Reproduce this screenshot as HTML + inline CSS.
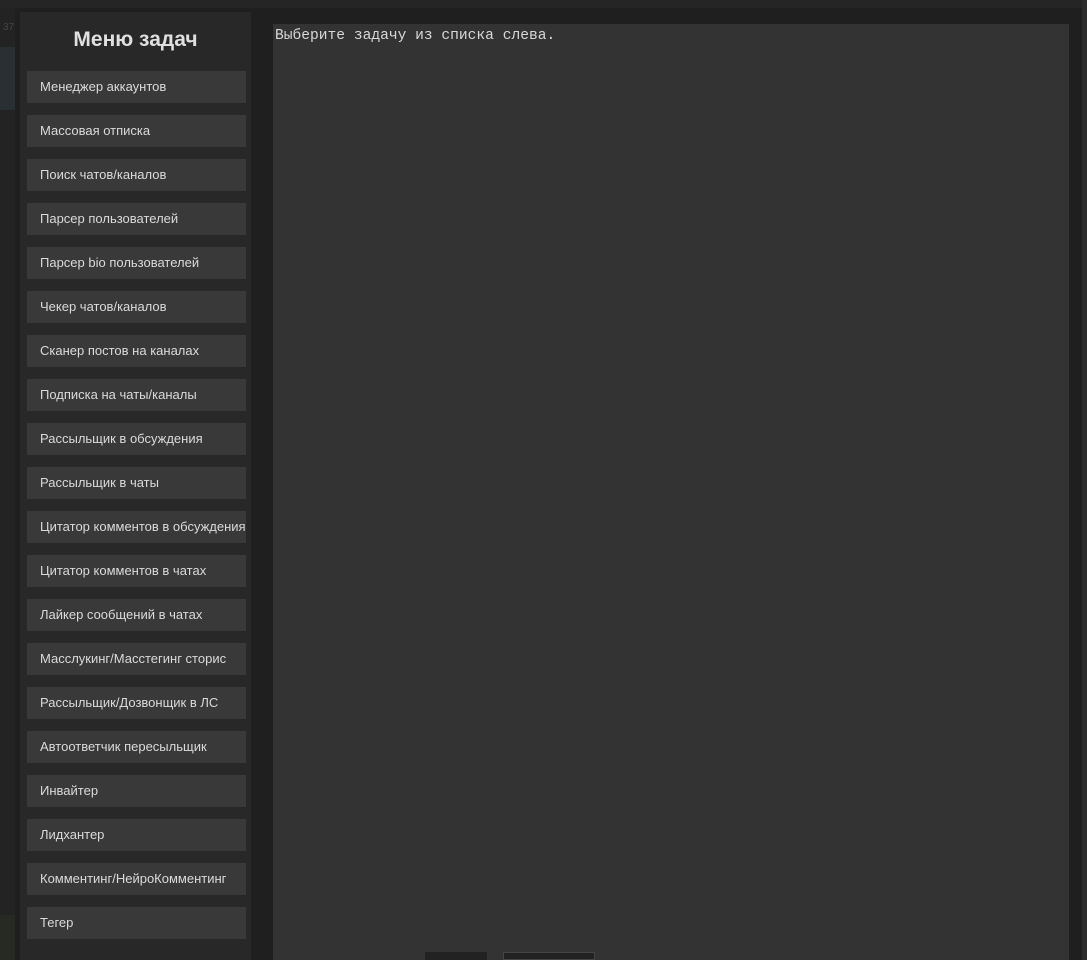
<!DOCTYPE html>
<html><head><meta charset="utf-8"><style>
html,body{margin:0;padding:0;width:1087px;height:960px;overflow:hidden;background:#252525;position:relative;font-family:"Liberation Sans",sans-serif}
.leftstrip{position:absolute;left:0;top:8px;width:15px;height:952px;background:#232323}
.leftblue{position:absolute;left:0;top:47px;width:15px;height:63px;background:#283033}
.leftgreen{position:absolute;left:0;top:915px;width:15px;height:45px;background:#272a23}
.num{position:absolute;left:3px;top:22px;font-size:10px;color:#444}
.rightstrip{position:absolute;left:1082px;top:0;width:5px;height:960px;background:#2c2c2c}
.modal{position:absolute;left:15px;top:8px;width:1067px;height:952px;background:#1f1f1f}
.side{position:absolute;left:20px;top:12px;width:231px;height:948px;background:#282828}
.title{position:absolute;left:20px;top:28px;width:231px;text-align:center;color:#e0e0e0;font-weight:bold;font-size:21px}
.btn{position:absolute;left:27px;width:219px;height:32px;background:#393939;color:#dadada;font-size:13px;line-height:32px;padding-left:13px;box-sizing:border-box;white-space:nowrap;overflow:hidden}
.content{position:absolute;left:273px;top:24px;width:796px;height:936px;background:#333333}
.msg{position:absolute;left:275px;top:28px;font-family:"Liberation Mono",monospace;font-size:14.6px;color:#d8d8d8}
.t1{position:absolute;left:425px;top:952px;width:62px;height:8px;background:#222}
.t2{position:absolute;left:503px;top:952px;width:92px;height:8px;background:#222;border:1px solid #444;box-sizing:border-box}
</style></head><body>
<div class="leftstrip"></div><div class="leftblue"></div><div class="leftgreen"></div><div class="num">37</div>
<div class="rightstrip"></div>
<div class="modal"></div>
<div class="side"></div>
<div class="title">Меню задач</div>
<div class="btn" style="top:71px">Менеджер аккаунтов</div>
<div class="btn" style="top:115px">Массовая отписка</div>
<div class="btn" style="top:159px">Поиск чатов/каналов</div>
<div class="btn" style="top:203px">Парсер пользователей</div>
<div class="btn" style="top:247px">Парсер bio пользователей</div>
<div class="btn" style="top:291px">Чекер чатов/каналов</div>
<div class="btn" style="top:335px">Сканер постов на каналах</div>
<div class="btn" style="top:379px">Подписка на чаты/каналы</div>
<div class="btn" style="top:423px">Рассыльщик в обсуждения</div>
<div class="btn" style="top:467px">Рассыльщик в чаты</div>
<div class="btn" style="top:511px">Цитатор комментов в обсуждения</div>
<div class="btn" style="top:555px">Цитатор комментов в чатах</div>
<div class="btn" style="top:599px">Лайкер сообщений в чатах</div>
<div class="btn" style="top:643px">Масслукинг/Масстегинг сторис</div>
<div class="btn" style="top:687px">Рассыльщик/Дозвонщик в ЛС</div>
<div class="btn" style="top:731px">Автоответчик пересыльщик</div>
<div class="btn" style="top:775px">Инвайтер</div>
<div class="btn" style="top:819px">Лидхантер</div>
<div class="btn" style="top:863px">Комментинг/НейроКомментинг</div>
<div class="btn" style="top:907px">Тегер</div>
<div class="content"></div>
<div class="msg">Выберите задачу из списка слева.</div>
<div class="t1"></div><div class="t2"></div>
</body></html>
